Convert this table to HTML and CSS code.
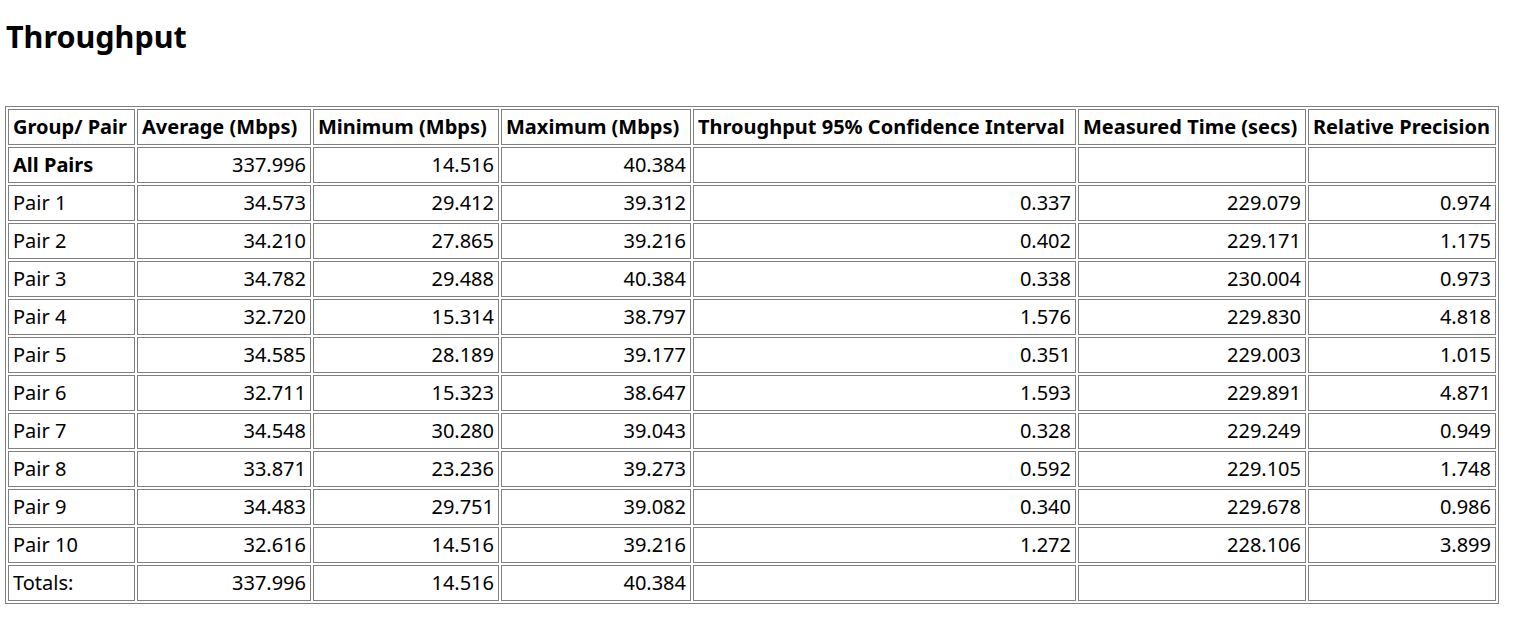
FILE: index.html
```html
<!DOCTYPE html>
<html>
<head>
<meta charset="utf-8">
<title>Throughput</title>
<link rel="stylesheet" href="styles.css">
</head>
<body>
<h1 class="title">Throughput</h1>
<table class="grid">
  <colgroup>
    <col class="c1"><col class="c2"><col class="c3"><col class="c4"><col class="c5"><col class="c6"><col class="c7">
  </colgroup>
  <tr class="head">
    <th>Group/ Pair</th><th>Average (Mbps)</th><th>Minimum (Mbps)</th><th>Maximum (Mbps)</th><th>Throughput 95% Confidence Interval</th><th>Measured Time (secs)</th><th>Relative Precision</th>
  </tr>
  <tr>
    <td class="strong">All Pairs</td><td class="num">337.996</td><td class="num">14.516</td><td class="num">40.384</td><td></td><td></td><td></td>
  </tr>
  <tr><td>Pair 1</td><td class="num">34.573</td><td class="num">29.412</td><td class="num">39.312</td><td class="num">0.337</td><td class="num">229.079</td><td class="num">0.974</td></tr>
  <tr><td>Pair 2</td><td class="num">34.210</td><td class="num">27.865</td><td class="num">39.216</td><td class="num">0.402</td><td class="num">229.171</td><td class="num">1.175</td></tr>
  <tr><td>Pair 3</td><td class="num">34.782</td><td class="num">29.488</td><td class="num">40.384</td><td class="num">0.338</td><td class="num">230.004</td><td class="num">0.973</td></tr>
  <tr><td>Pair 4</td><td class="num">32.720</td><td class="num">15.314</td><td class="num">38.797</td><td class="num">1.576</td><td class="num">229.830</td><td class="num">4.818</td></tr>
  <tr><td>Pair 5</td><td class="num">34.585</td><td class="num">28.189</td><td class="num">39.177</td><td class="num">0.351</td><td class="num">229.003</td><td class="num">1.015</td></tr>
  <tr><td>Pair 6</td><td class="num">32.711</td><td class="num">15.323</td><td class="num">38.647</td><td class="num">1.593</td><td class="num">229.891</td><td class="num">4.871</td></tr>
  <tr><td>Pair 7</td><td class="num">34.548</td><td class="num">30.280</td><td class="num">39.043</td><td class="num">0.328</td><td class="num">229.249</td><td class="num">0.949</td></tr>
  <tr><td>Pair 8</td><td class="num">33.871</td><td class="num">23.236</td><td class="num">39.273</td><td class="num">0.592</td><td class="num">229.105</td><td class="num">1.748</td></tr>
  <tr><td>Pair 9</td><td class="num">34.483</td><td class="num">29.751</td><td class="num">39.082</td><td class="num">0.340</td><td class="num">229.678</td><td class="num">0.986</td></tr>
  <tr><td>Pair 10</td><td class="num">32.616</td><td class="num">14.516</td><td class="num">39.216</td><td class="num">1.272</td><td class="num">228.106</td><td class="num">3.899</td></tr>
  <tr><td>Totals:</td><td class="num">337.996</td><td class="num">14.516</td><td class="num">40.384</td><td></td><td></td><td></td></tr>
</table>
</body>
</html>
```
FILE: styles.css
```css
html, body {
  margin: 0;
  padding: 0;
  background: #ffffff;
  color: #000000;
  font-family: "Noto Sans", "Open Sans", sans-serif;
}

body {
  padding: 0 5px;
}

.title {
  margin: 0;
  padding-top: 14px;
  height: 106px;
  box-sizing: border-box;
  font-size: 30.5px;
  font-weight: 700;
  line-height: 44px;
  padding-left: 1px;
}

.grid {
  border: 1px solid #808080;
  border-collapse: separate;
  border-spacing: 2px;
  table-layout: fixed;
  width: 1494px;
  font-size: 20px;
}

.c1 { width: 127px; }
.c2 { width: 174px; }
.c3 { width: 186px; }
.c4 { width: 190px; }
.c5 { width: 383px; }
.c6 { width: 228px; }
.c7 { width: 188px; }

.grid th,
.grid td {
  border: 1px solid #808080;
  padding: 0 4px;
  height: 36px;
  box-sizing: border-box;
  white-space: nowrap;
  overflow: hidden;
  vertical-align: middle;
  line-height: 26px;
}

.grid th {
  font-weight: 700;
  text-align: left;
  padding: 0 3px 0 4px;
}

.grid td {
  text-align: left;
}

.grid td.num {
  text-align: right;
}

.grid td.strong {
  font-weight: 700;
}
```
